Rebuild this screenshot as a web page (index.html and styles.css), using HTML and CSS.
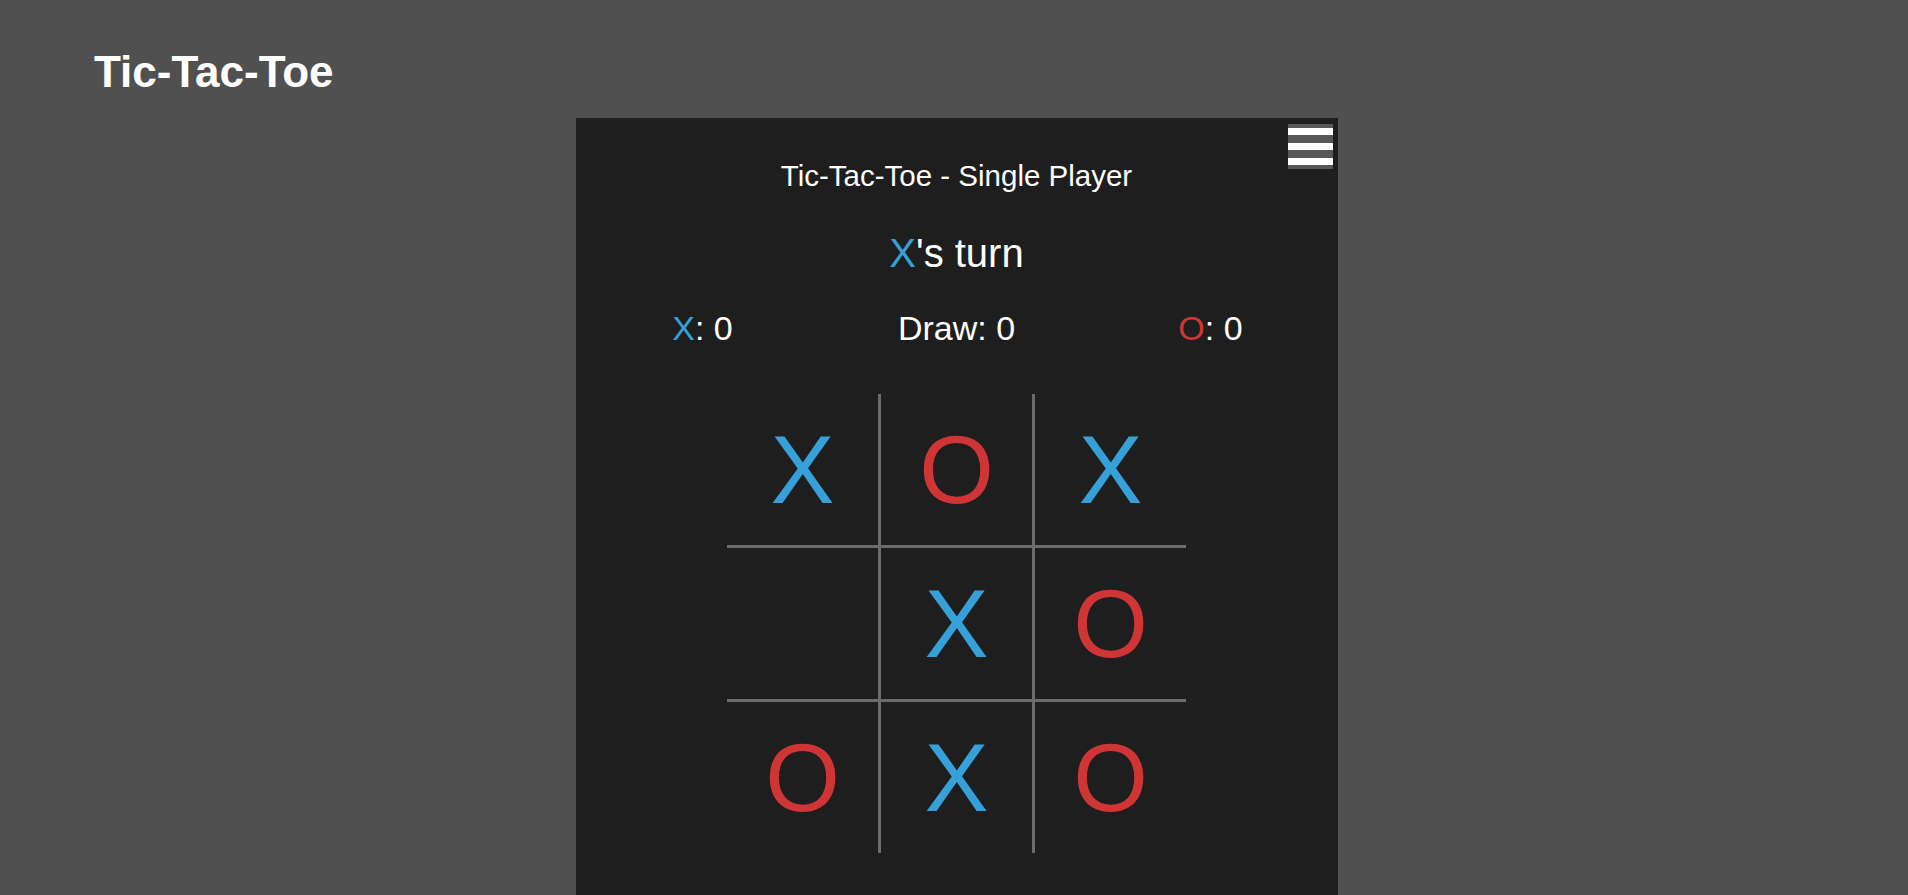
FILE: index.html
```html
<!DOCTYPE html>
<html lang="en">
<head>
<meta charset="utf-8">
<title>Tic-Tac-Toe</title>
<link rel="stylesheet" href="styles.css">
</head>
<body>
<header class="site-header">
  <h1 class="site-title">Tic-Tac-Toe</h1>
</header>
<main class="stage">
  <section class="game-card">
    <button class="menu-btn" aria-label="Menu">
      <span class="menu-bar"></span>
      <span class="menu-bar"></span>
      <span class="menu-bar"></span>
    </button>
    <h2 class="game-title">Tic-Tac-Toe - Single Player</h2>
    <p class="turn"><span class="x">X</span>'s turn</p>
    <div class="scores">
      <div class="score"><span class="x">X</span>: 0</div>
      <div class="score">Draw: 0</div>
      <div class="score"><span class="o">O</span>: 0</div>
    </div>
    <div class="board">
      <div class="cell x">X</div>
      <div class="cell o">O</div>
      <div class="cell x">X</div>
      <div class="cell"></div>
      <div class="cell x">X</div>
      <div class="cell o">O</div>
      <div class="cell o">O</div>
      <div class="cell x">X</div>
      <div class="cell o">O</div>
    </div>
  </section>
</main>
</body>
</html>
```
FILE: styles.css
```css
* { box-sizing: border-box; }

html, body {
  margin: 0;
  padding: 0;
  height: 895px;
  overflow: hidden;
}

body {
  background: #505050;
  color: #ffffff;
  font-family: "Liberation Sans", Arial, sans-serif;
}

.site-header {
  padding: 50px 0 24px 94px;
}

.site-title {
  margin: 0;
  font-size: 44px;
  line-height: 1;
  font-weight: bold;
  color: #ffffff;
}

.stage {
  display: flex;
  justify-content: center;
  padding-left: 5px;
}

.game-card {
  position: relative;
  width: 762px;
  height: 777px;
  background: #1e1e1e;
  padding-top: 43px;
  display: flex;
  flex-direction: column;
  align-items: center;
}

.menu-btn {
  position: absolute;
  top: 6px;
  right: 5px;
  width: 45px;
  height: 45px;
  padding: 4px 0;
  margin: 0;
  border: none;
  background: #575757;
  display: flex;
  flex-direction: column;
  justify-content: space-between;
}

.menu-bar {
  display: block;
  width: 100%;
  height: 7px;
  background: #ffffff;
}

.game-title {
  margin: 0;
  font-size: 29.5px;
  line-height: 1;
  font-weight: normal;
}

.turn {
  margin: 42px 0 0;
  font-size: 40px;
  line-height: 1;
}

.x { color: #36a0d8; }
.o { color: #d03535; }

.scores {
  margin-top: 38px;
  width: 100%;
  display: grid;
  grid-template-columns: 1fr 1fr 1fr;
  font-size: 34px;
  line-height: 1;
}

.score {
  text-align: center;
}

.board {
  margin-top: 49px;
  display: grid;
  grid-template-columns: repeat(3, auto);
}

.cell {
  width: 151px;
  height: 151px;
  display: flex;
  align-items: center;
  justify-content: center;
  font-size: 96px;
  line-height: 1;
  padding-top: 2px;
}

.cell:nth-child(3n+1),
.cell:nth-child(3n+2) {
  width: 154px;
  border-right: 3px solid #6b6b6b;
}

.cell:nth-child(-n+6) {
  height: 154px;
  border-bottom: 3px solid #6b6b6b;
}
```
